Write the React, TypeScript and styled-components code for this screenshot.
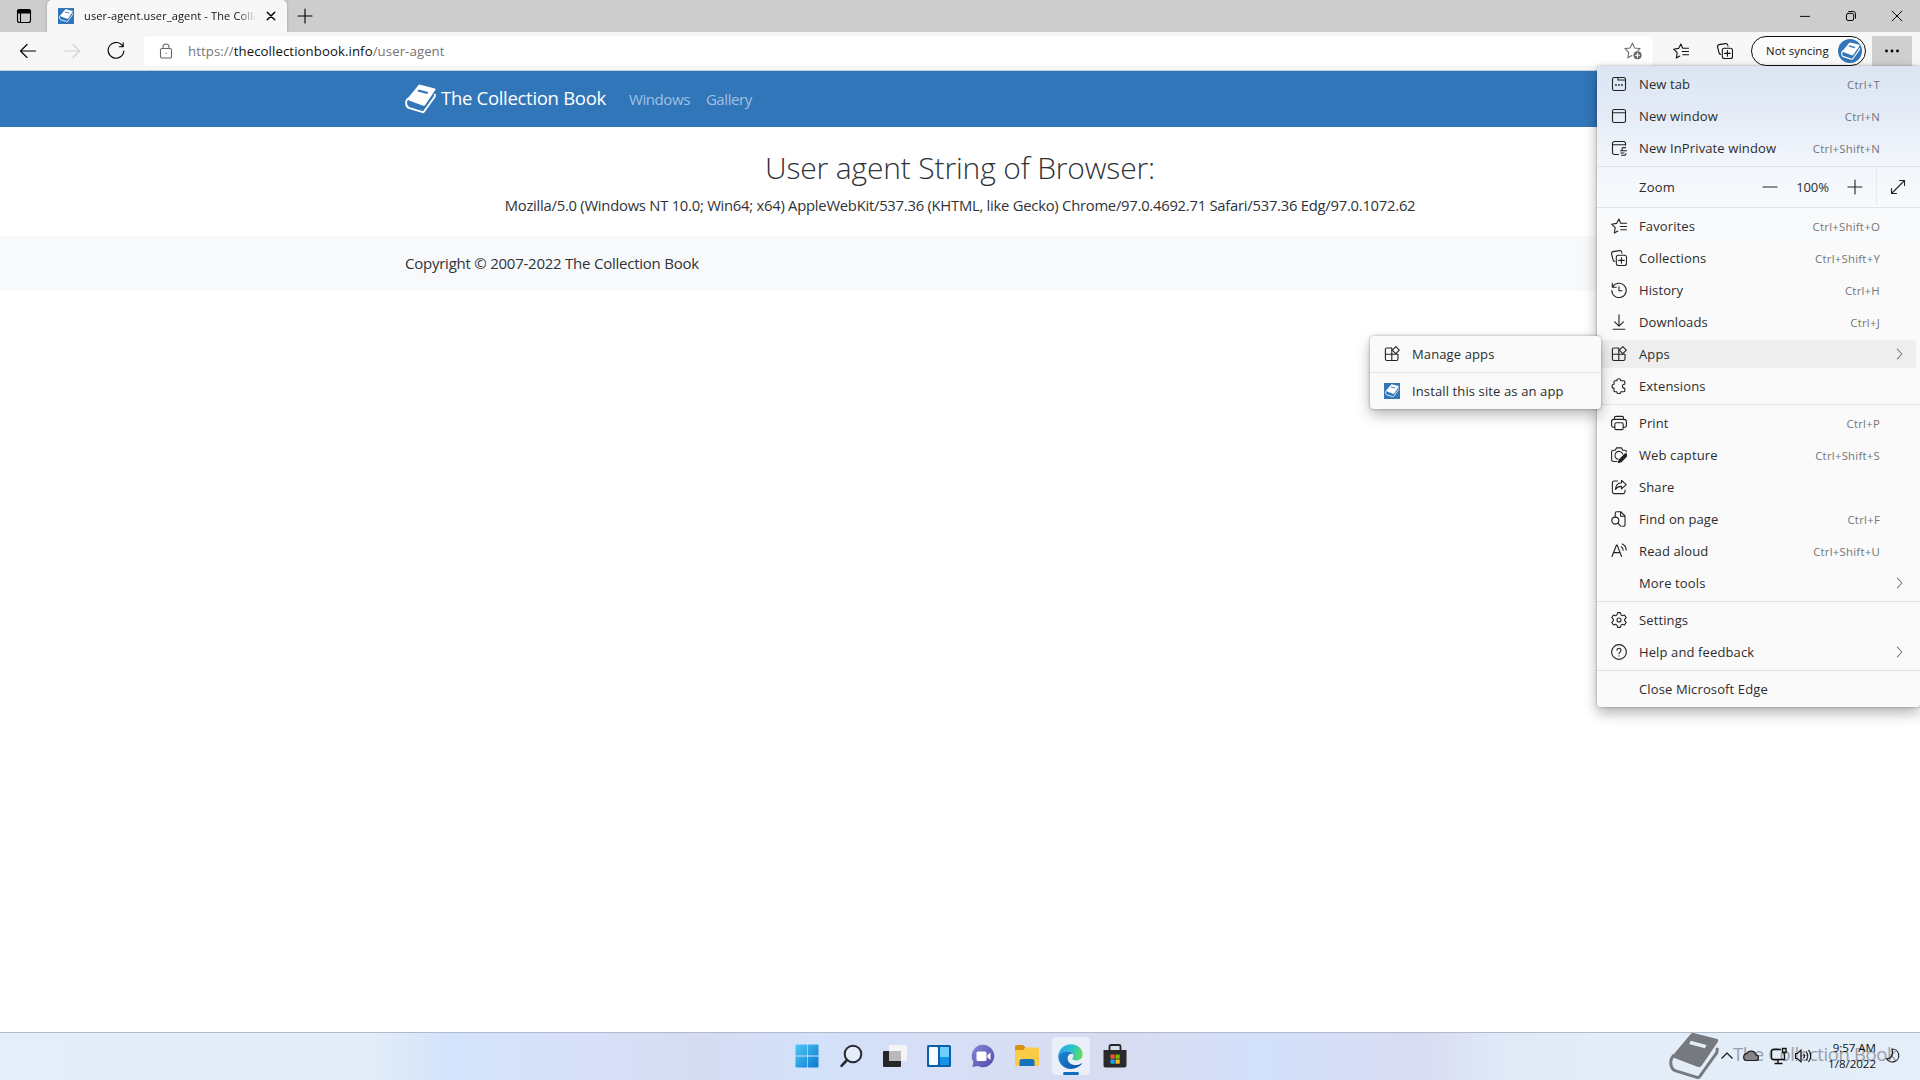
import React from "react";
import styled, { createGlobalStyle } from "styled-components";

const Global = createGlobalStyle`
  * { box-sizing: border-box; }
  html, body { margin: 0; padding: 0; background: #fff; overflow: hidden; }
  body { font-family: "Open Sans", "Noto Sans", sans-serif; color: #2f3338; }
  svg { display: block; flex: none; }
`;

/* ---------- icons ---------- */

const Line = styled.svg.attrs({ viewBox: "0 0 16 16", fill: "none" })<{ $size?: number; $color?: string; $w?: number }>`
  width: ${(p) => p.$size ?? 16}px;
  height: ${(p) => p.$size ?? 16}px;
  stroke: ${(p) => p.$color ?? "#222"};
  stroke-width: ${(p) => p.$w ?? 1.1};
  stroke-linecap: round;
  stroke-linejoin: round;
`;

const Book = ({ w, color, slit }: { w: number; color: string; slit: string }) => (
  <svg width={w} height={w * 0.957} viewBox="44 72 92 88">
    <path d="M89 74 L133 85 Q136 87 134 90 L104 134 Q101 138 96 136 L54 120 Q50 118 52 114 L82 78 Q85 73 89 74Z" fill={color} />
    <path d="M84 88 L113 96 L110 102 L81 94Z" fill={slit} />
    <path d="M133 101 L132 110 L101 153 Q99 157 94 155 L55 143 Q45 138 48 122 L53 114" fill="none" stroke={color} strokeWidth="5.5" strokeLinejoin="round" />
  </svg>
);

const TabActions = () => (
  <Line $color="#000">
    <rect x="1.5" y="1.5" width="13" height="13" rx="2" />
    <path d="M1.5 3.5a2 2 0 0 1 2-2h9a2 2 0 0 1 2 2V5h-13z" fill="#000" />
    <path d="M4.5 5v9.5" />
  </Line>
);
const StarLines = ({ color = "#222" }) => (
  <Line $color={color}>
    <path d="M9.6 5 7.9 1 5.6 5.4.6 6.2l3.6 3.5-.9 5.3 3.5-2" />
    <path d="M10 5.2h5.5M9.2 8.5h6.3M9.8 11.8h5.7" />
  </Line>
);
const Collections = ({ color = "#222" }) => (
  <Line $color={color}>
    <rect x="5.3" y="5.3" width="10.2" height="10.2" rx="2" />
    <path d="M10.4 7.6v5.6M7.6 10.4h5.6M3.6 11.4A2.2 2.2 0 0 1 2 9.6L.6 4A2 2 0 0 1 2 1.6L8.4.6a2 2 0 0 1 2.3 1.6l.3 1" />
  </Line>
);
const NewTab = () => (
  <Line>
    <rect x="1.5" y="1.5" width="13" height="13" rx="1.8" />
    <path d="M7 1.5V4h7.5" />
    <path d="M4.6 8.9h.7M7.6 8.9h.7M10.6 8.9h.7" strokeWidth="1.5" />
  </Line>
);
const NewWindow = () => (
  <Line>
    <rect x="1.5" y="1.5" width="13" height="13" rx="1.8" />
    <path d="M1.5 4.8h13" />
  </Line>
);
const InPrivate = () => (
  <Line>
    <path d="M7.5 14.5H3.3a1.8 1.8 0 0 1-1.8-1.8V3.3a1.8 1.8 0 0 1 1.8-1.8h9.4a1.8 1.8 0 0 1 1.8 1.8v2M1.5 4.8h13" />
    <path d="M14.5 7.6h-2.3a1.6 1.6 0 0 0 0 3.1h2.2M9.5 10.8h6M9.8 13h3.2M10.5 15.3h2.8a1.6 1.6 0 0 0 1.6-1.4" />
  </Line>
);
const History = () => (
  <Line>
    <path d="M1.3 1.4v3.9h3.9M1.6 5.1A7.2 7.2 0 1 1 .8 8.5M8 4.8v4h3" />
  </Line>
);
const Download = () => (
  <Line>
    <path d="M8 .8v11M3.6 7.8 8 12.2l4.4-4.4M2.2 15.3h11.6" />
  </Line>
);
const Apps = () => (
  <Line>
    <path d="M7.8 2H3a1.6 1.6 0 0 0-1.6 1.6v9.3A1.6 1.6 0 0 0 3 14.5h9.4a1.6 1.6 0 0 0 1.6-1.6V8.3H1.4M7.8 2v12.5" />
    <path d="M11.8.7 15.3 4.2l-3.5 3.5-3.5-3.5z" />
  </Line>
);
const Extensions = () => (
  <Line>
    <path d="M5.8 2.8a2 2 0 0 1 4 0h3a1 1 0 0 1 1 1v2.4h-.4a2 2 0 0 0 0 4h.4v2.6a1 1 0 0 1-1 1h-3a2 2 0 0 1-4 0H4a1 1 0 0 1-1-1v-2.6a2 2 0 0 1 0-4V3.8a1 1 0 0 1 1-1z" />
  </Line>
);
const Print = () => (
  <Line>
    <path d="M3.8 12.2H2.3A1.7 1.7 0 0 1 .6 10.5V6.7a2.3 2.3 0 0 1 2.3-2.3h10.2a2.3 2.3 0 0 1 2.3 2.3v3.8a1.7 1.7 0 0 1-1.7 1.7h-1.5M3.4 4.4V3A1.6 1.6 0 0 1 5 1.4h6A1.6 1.6 0 0 1 12.6 3v1.4" />
    <rect x="3.8" y="7.8" width="8.4" height="6.8" rx="1.4" />
  </Line>
);
const Capture = () => (
  <Line>
    <path d="M6 14.5H2.4A1.8 1.8 0 0 1 .6 12.7V5a1.8 1.8 0 0 1 1.8-1.8h1.8L5.6.9h4.8l1.4 2.3h1.8A1.8 1.8 0 0 1 15.4 5" />
    <path d="M7 12.3A4 4 0 1 1 11.8 7.2" />
    <path d="m15.4 7-1.2-.2-6 6L7.4 15.5l2.8-.7L15.6 9z" fill="#222" />
  </Line>
);
const Share = () => (
  <Line>
    <path d="M6.5 2H3.2a1.8 1.8 0 0 0-1.8 1.8v9A1.8 1.8 0 0 0 3.2 14.6h9a1.8 1.8 0 0 0 1.8-1.8V11" />
    <path d="M10.5 1.4 15.2 5.6l-4.7 4.2V7.4C7.8 7.3 6 8.2 4.4 10.4 4.7 6.8 6.6 4 10.5 3.8z" />
  </Line>
);
const Find = () => (
  <Line>
    <path d="M4.2 5.8V2.2A1.5 1.5 0 0 1 5.7.7H9.8L14 5v8.8a1.5 1.5 0 0 1-1.5 1.5h-1.5M9.6.8v4.5H14" />
    <circle cx="4.3" cy="9.6" r="3.5" />
    <path d="m6.8 12.2 3 3" />
  </Line>
);
const ReadAloud = () => (
  <Line>
    <path d="M1 13.5 5.5 2h.6l4.5 11.5M2.6 9.6H9M10.3 3.8a4 4 0 0 1 1.8 3.4M11.3.9a7 7 0 0 1 3.9 6" />
  </Line>
);
const Gear = () => (
  <Line>
    <path d="M6.6.6h2.8l.6 2.3 1.3.8 2.2-.7 1.7 2.6L13.6 7.3v1.4l1.6 1.7-1.7 2.6-2.2-.7-1.3.8-.6 2.3H6.6L6 13.1l-1.3-.8-2.2.7L.8 10.4l1.6-1.7V7.3L.8 5.6l1.7-2.6 2.2.7L6 2.9z" />
    <circle cx="8" cy="8" r="2" />
  </Line>
);
const Help = () => (
  <Line>
    <circle cx="8" cy="8" r="7.4" />
    <path d="M6 6.2a2 2 0 1 1 3.2 1.7C8.4 8.5 8 8.8 8 9.7M8 11.8v.1" />
  </Line>
);
const Chevron = () => (
  <Line $size={12} $color="#777" $w={1.4}>
    <path d="m4.5 1.5 6 6.5-6 6.5" />
  </Line>
);

/* ---------- window chrome ---------- */

const Screen = styled.div`
  width: 1920px;
  height: 1080px;
  display: flex;
  flex-direction: column;
  background: #fff;
  position: relative;
  overflow: hidden;
`;
const TabStrip = styled.div`
  height: 32px;
  flex: none;
  display: flex;
  background: #cdcdcd;
`;
const Slot = styled.div<{ $w: number }>`
  width: ${(p) => p.$w}px;
  height: 100%;
  display: flex;
  align-items: center;
  justify-content: center;
  flex: none;
`;
const Tab = styled.div`
  width: 240px;
  height: 32px;
  background: #f7f7f7;
  border-radius: 5px 5px 0 0;
  box-shadow: 0 0 3px rgba(0, 0, 0, 0.25);
  display: flex;
  align-items: center;
  justify-content: space-between;
  padding: 0 10px 0 11px;
`;
const Favicon = styled.div`
  width: 16px;
  height: 16px;
  background: #3176b9;
  display: flex;
  align-items: center;
  justify-content: center;
  flex: none;
`;
const TabTitle = styled.div`
  width: 172px;
  margin-left: 10px;
  margin-right: auto;
  font-size: 11px;
  line-height: 16px;
  letter-spacing: 0.14px;
  white-space: nowrap;
  overflow: hidden;
  color: #111;
  mask-image: linear-gradient(90deg, #000 90%, transparent 100%);
`;
const WindowButtons = styled.div`
  margin-left: auto;
  display: flex;
`;
const Toolbar = styled.div`
  height: 39px;
  flex: none;
  background: #f7f7f7;
  border-bottom: 1px solid #c5d0da;
  display: flex;
  align-items: center;
`;
const AddressBar = styled.div`
  width: 1509px;
  height: 30px;
  background: #fff;
  border-radius: 3px;
  display: flex;
  align-items: center;
  padding: 0 11px 0 14px;
  box-shadow: 0 0 1px rgba(0, 0, 0, 0.12);
`;
const Url = styled.div`
  margin-left: 14px;
  font-size: 13.2px;
  letter-spacing: 0.09px;
  color: #767676;
  flex: 1;
  b { font-weight: 400; color: #111; }
`;
const Profile = styled.div`
  width: 115px;
  height: 30px;
  border: 1px solid #111;
  border-radius: 15px;
  background: #fbfbfb;
  display: flex;
  align-items: center;
  justify-content: space-between;
  padding: 0 3px 0 14px;
  font-size: 11.4px;
  letter-spacing: 0.05px;
  line-height: 16px;
  white-space: nowrap;
  color: #111;
`;
const Avatar = styled.div`
  width: 24px;
  height: 24px;
  border-radius: 50%;
  background: #3176b9;
  display: flex;
  align-items: center;
  justify-content: center;
`;
const MoreButton = styled.div`
  width: 40px;
  height: 30px;
  margin-left: 6px;
  background: #cfcfcf;
  display: flex;
  align-items: center;
  justify-content: center;
`;

/* ---------- page ---------- */

const Navbar = styled.div`
  height: 56px;
  flex: none;
  background: #3176b9;
  display: flex;
  align-items: center;
  padding-left: 405px;
`;
const Brand = styled.div`
  margin-left: 5px;
  width: 188px;
  padding-bottom: 3px;
  font-size: 18.5px;
  letter-spacing: -0.3px;
  color: #fff;
  white-space: nowrap;
`;
const NavLink = styled.div`
  font-size: 15px;
  letter-spacing: -0.42px;
  color: #a0c0e2;
  margin-right: 16px;
`;
const Main = styled.main`
  height: 109px;
  flex: none;
  display: flex;
  flex-direction: column;
  align-items: center;
  padding-top: 20px;
`;
const Heading = styled.h1`
  margin: 0;
  font-size: 30px;
  letter-spacing: -0.15px;
  line-height: 42px;
  font-weight: 300;
  white-space: nowrap;
`;
const Agent = styled.p`
  margin: 4px 0 0;
  font-size: 14.8px;
  letter-spacing: -0.25px;
  line-height: 24px;
  white-space: nowrap;
`;
const Footer = styled.footer`
  height: 55px;
  flex: none;
  background: #f8f9fa;
  padding-left: 405px;
  font-size: 15px;
  letter-spacing: -0.24px;
  line-height: 55px;
`;

/* ---------- menus ---------- */

const Menu = styled.div`
  position: absolute;
  left: 1597px;
  top: 66px;
  width: 323px;
  padding: 2px 0;
  border-radius: 4px;
  background: linear-gradient(180deg, #dbe5f3 0, #e2eaf6 40px, #f0f4fb 90px, #f8fafc 140px, #fafafa 200px);
  box-shadow: 0 6px 14px rgba(0, 0, 0, 0.3), 0 0 3px rgba(0, 0, 0, 0.3);
`;
const SubMenu = styled.div`
  position: absolute;
  left: 1370px;
  top: 336px;
  width: 231px;
  padding: 2px 0;
  border-radius: 4px;
  background: #fafafa;
  box-shadow: 0 6px 14px rgba(0, 0, 0, 0.28), 0 0 3px rgba(0, 0, 0, 0.35);
`;
const Rule = styled.div`
  height: 1px;
  margin: 2px 0;
  background: #e0e2e6;
`;
const Row = styled.div<{ $active?: boolean }>`
  height: ${(p) => (p.$active ? 28 : 32)}px;
  margin: ${(p) => (p.$active ? "2px 4px" : "0 4px")};
  padding: 0 10px;
  border-radius: 3px;
  background: ${(p) => (p.$active ? "#eeeeee" : "transparent")};
  display: flex;
  align-items: center;
`;
const RowIcon = styled.div`
  width: 16px;
  display: flex;
`;
const Label = styled.div`
  margin-left: 12px;
  font-size: 13px;
  letter-spacing: 0.12px;
  color: #2c2c2c;
  white-space: nowrap;
  flex: 1;
`;
const Shortcut = styled.div`
  font-size: 11.4px;
  letter-spacing: 0.23px;
  color: #757575;
  margin-right: 26px;
`;
const ZoomRow = styled.div`
  height: 40px;
  margin: -2px 0;
  padding-left: 42px;
  display: flex;
  align-items: center;
  font-size: 13px;
  color: #2c2c2c;
`;
const ZoomLabel = styled.div`
  width: 123px;
  letter-spacing: 0.25px;
`;
const ZoomValue = styled.div`
  width: 69px;
  text-align: center;
  letter-spacing: -0.1px;
`;
const ZoomFull = styled.div`
  margin-left: 13px;
  width: 43px;
  height: 36px;
  border-left: 1px solid #e6e8ec;
  display: flex;
  align-items: center;
  justify-content: center;
`;

type Item = { label: string; icon?: React.ReactNode; keys?: string; sub?: boolean; active?: boolean };
const MenuRow = ({ label, icon, keys, sub, active }: Item) => (
  <Row $active={active}>
    <RowIcon>{icon}</RowIcon>
    <Label>{label}</Label>
    {keys && <Shortcut>{keys}</Shortcut>}
    {sub && <Chevron />}
  </Row>
);

const groups: Item[][] = [
  [
    { label: "Favorites", icon: <StarLines />, keys: "Ctrl+Shift+O" },
    { label: "Collections", icon: <Collections />, keys: "Ctrl+Shift+Y" },
    { label: "History", icon: <History />, keys: "Ctrl+H" },
    { label: "Downloads", icon: <Download />, keys: "Ctrl+J" },
    { label: "Apps", icon: <Apps />, sub: true, active: true },
    { label: "Extensions", icon: <Extensions /> },
  ],
  [
    { label: "Print", icon: <Print />, keys: "Ctrl+P" },
    { label: "Web capture", icon: <Capture />, keys: "Ctrl+Shift+S" },
    { label: "Share", icon: <Share /> },
    { label: "Find on page", icon: <Find />, keys: "Ctrl+F" },
    { label: "Read aloud", icon: <ReadAloud />, keys: "Ctrl+Shift+U" },
    { label: "More tools", sub: true },
  ],
  [
    { label: "Settings", icon: <Gear /> },
    { label: "Help and feedback", icon: <Help />, sub: true },
  ],
  [{ label: "Close Microsoft Edge" }],
];

/* ---------- taskbar ---------- */

const Taskbar = styled.div`
  margin-top: auto;
  height: 48px;
  flex: none;
  display: flex;
  justify-content: center;
  align-items: center;
  padding-left: 1px;
  position: relative;
  box-shadow: inset 0 1px 0 #b3b9c8;
  background: linear-gradient(90deg, #e4eef8 0, #e3edf8 370px, #d3e3fb 450px, #d7e0f8 600px, #d5dcf2 700px, #d3e1fa 810px, #d6dff6 950px, #d8dcf1 1120px, #d2e0fa 1260px, #d8dcf2 1420px, #dfe9f7 1500px, #e3edf8 1600px, #e4eef8 100%);
`;
const TaskItem = styled.div<{ $on?: boolean }>`
  width: 38px;
  height: 38px;
  margin: 0 3px;
  border-radius: 4px;
  background: ${(p) => (p.$on ? "#ebeffa" : "transparent")};
  display: flex;
  align-items: center;
  justify-content: center;
  position: relative;
`;
const Running = styled.div`
  position: absolute;
  left: 11px;
  bottom: 0;
  width: 16px;
  height: 3px;
  border-radius: 2px;
  background: #0f6cbd;
`;
const Tray = styled.div`
  position: absolute;
  right: 0;
  top: 0;
  height: 48px;
  width: 200px;
  display: flex;
  align-items: center;
`;
const Clock = styled.div`
  width: 61px;
  padding-right: 1px;
  text-align: right;
  font-size: 11.6px;
  line-height: 16px;
  letter-spacing: -0.05px;
  color: #111;
  white-space: nowrap;
`;
const Watermark = styled.div`
  position: absolute;
  right: 0;
  top: 0;
  width: 251px;
  height: 48px;
  display: flex;
  align-items: center;
  overflow: hidden;
`;
const WatermarkText = styled.div`
  margin-left: 14px;
  padding-bottom: 5px;
  font-size: 18.5px;
  letter-spacing: -0.38px;
  color: #9aa0a8;
  white-space: nowrap;
`;

const TaskIcons = () => (
  <>
    <TaskItem>
      <svg width="24" height="24" viewBox="0 0 24 24">
        <defs>
          <linearGradient id="win" x1="0" y1="0" x2="1" y2="1">
            <stop offset="0" stopColor="#4fc8f4" />
            <stop offset="1" stopColor="#0a78d0" />
          </linearGradient>
        </defs>
        <path d="M1.5.5H12v10.9H.5V1.5a1 1 0 0 1 1-1zM12.7.5h9.8a1 1 0 0 1 1 1v9.9H12.7zM.5 12.4H12v11.1H1.5a1 1 0 0 1-1-1zM12.7 12.4h10.8v10.1a1 1 0 0 1-1 1h-9.8z" fill="url(#win)" />
      </svg>
    </TaskItem>
    <TaskItem>
      <svg width="24" height="24" viewBox="0 0 24 24" fill="none" stroke="#262a33" strokeLinecap="round">
        <circle cx="14" cy="10" r="8.3" strokeWidth="2" fill="#e6ebfa" />
        <path d="m8 16-5.5 5.8" strokeWidth="2.6" />
      </svg>
    </TaskItem>
    <TaskItem>
      <svg width="26" height="24" viewBox="0 0 26 24">
        <rect x="1" y="7" width="18" height="16" rx="1" fill="#262626" />
        <rect x="7" y="1" width="18" height="16" rx="1" fill="#f4f4f6" />
        <rect x="7" y="7" width="12" height="10" fill="#b9b9ba" />
      </svg>
    </TaskItem>
    <TaskItem>
      <svg width="24" height="24" viewBox="0 0 24 24">
        <rect y="1" width="24" height="22" rx="1.5" fill="#0d5ea8" />
        <rect x="2" y="3" width="9" height="18" rx="1" fill="#f5fbff" />
        <rect x="13" y="3" width="9" height="10" fill="#6cd0fb" />
        <rect x="13" y="13" width="9" height="8" fill="#1793e6" />
      </svg>
    </TaskItem>
    <TaskItem>
      <svg width="24" height="24" viewBox="0 0 24 24">
        <defs>
          <linearGradient id="chat" x1="0" y1="0" x2="1" y2="1">
            <stop offset="0" stopColor="#8388d6" />
            <stop offset="1" stopColor="#5448ab" />
          </linearGradient>
        </defs>
        <path d="M12 .8A11.2 11.2 0 1 1 7 22l-5.6 1 .9-5.2A11.2 11.2 0 0 1 12 .8z" fill="url(#chat)" />
        <rect x="5.5" y="7.5" width="10" height="9.5" rx="1.5" fill="#fff" />
        <path d="m16.5 11 3-2.5v7.5l-3-2.5z" fill="#fff" />
      </svg>
    </TaskItem>
    <TaskItem>
      <svg width="26" height="24" viewBox="0 0 26 24">
        <path d="M1 3a2 2 0 0 1 2-2h6l3 3v3H1z" fill="#d49112" />
        <path d="M1 6h8l2.500-2.500H23.500A1.500 1.500 0 0 1 25 5v15.500a1.500 1.500 0 0 1-1.500 1.500h-21A1.500 1.500 0 0 1 1 20.500z" fill="#fbcb47" />
        <path d="M5.500 22v-4.500A2.500 2.500 0 0 1 8 15h10a2.500 2.500 0 0 1 2.500 2.500V22z" fill="#1572bd" />
      </svg>
    </TaskItem>
    <TaskItem $on>
      <svg width="25" height="25" viewBox="0 0 24 24">
        <defs>
          <linearGradient id="edgeTop" x1="0" y1="0.3" x2="1" y2="0.5">
            <stop offset="0" stopColor="#22a7e8" />
            <stop offset="0.55" stopColor="#2bc4cf" />
            <stop offset="1" stopColor="#66dc55" />
          </linearGradient>
          <linearGradient id="edgeLow" x1="0" y1="0" x2="1" y2="1">
            <stop offset="0" stopColor="#1989dc" />
            <stop offset="1" stopColor="#0f52a0" />
          </linearGradient>
        </defs>
        <path d="M.3 11.5C.8 5 6 .2 12.2.2c6.8 0 11.5 4.6 11.5 9.6 0 3.6-2.9 6-6 6-2.5 0-4-.8-4-1.7 0-.6 1-1.2 1-2.9 0-2.3-2.3-4.2-5.4-4.2C5 7 1.5 9 .3 11.5z" fill="url(#edgeTop)" />
        <path d="M.3 11.5C1.5 8.6 5 7 8.7 7c3 0 5 1.2 5.8 2.6-3-.8-5.3 1-5.3 4 0 3.8 3.5 6.6 7.5 6.6 2.2 0 4.3-.8 5.6-1.6.5-.3.9.2.5.7C20.5 22.3 16.6 24 12.7 24 5.5 24 .1 18.5.3 11.5z" fill="url(#edgeLow)" />
      </svg>
      <Running />
    </TaskItem>
    <TaskItem>
      <svg width="24" height="24" viewBox="0 0 24 24">
        <path d="M6.5 7V2.5A1.5 1.5 0 0 1 8 1h8a1.5 1.5 0 0 1 1.5 1.5V7" fill="none" stroke="#262626" strokeWidth="1.8" />
        <path d="M.5 6h23v15.5a2 2 0 0 1-2 2h-19a2 2 0 0 1-2-2z" fill="#2a2a2a" />
        <rect x="7.5" y="10.5" width="4.2" height="4.2" fill="#f0562b" />
        <rect x="12.5" y="10.5" width="4.2" height="4.2" fill="#7fba00" />
        <rect x="7.5" y="15.5" width="4.2" height="4.2" fill="#13a5ee" />
        <rect x="12.5" y="15.5" width="4.2" height="4.2" fill="#fdb913" />
      </svg>
    </TaskItem>
  </>
);

const TrayIcons = () => (
  <svg width="96" height="24" viewBox="0 0 96 24" fill="none" stroke="#111" strokeWidth="1.2">
    <path d="m1.5 14.5 5.500-5.500 5.500 5.500" />
    <path d="M26 16.500h9.500a2.800 2.800 0 0 0 .4-5.600 4.800 4.800 0 0 0-9-1.200 3.500 3.500 0 0 0-.9 6.800z" fill="#86868a" stroke="#222" />
    <path d="M61 5.500h-7.500a2 2 0 0 0-2 2v6a2 2 0 0 0 2 2h11v-5M58 15.500v4M54.500 19.500h8M62.500 4.500h3.500v4h-3.500zM64.200 8.500v3" strokeWidth="1.4" />
    <path d="M75.500 9.500h2l3.500-3.500v12l-3.500-3.500h-2zM83.500 9.500a4 4 0 0 1 0 5M86 7.500a7 7 0 0 1 0 9M88.500 5.800a10 10 0 0 1 0 12.400" strokeWidth="1.1" />
  </svg>
);

export default function App() {
  return (
    <Screen>
      <Global />
      <TabStrip>
        <Slot $w={47}><TabActions /></Slot>
        <Tab>
          <Favicon><Book w={14} color="#fff" slit="#3176b9" /></Favicon>
          <TabTitle>user-agent.user_agent - The Collection</TabTitle>
          <Line $size={12} $color="#000" $w={1.9}><path d="m3 3 10 10M13 3 3 13" /></Line>
        </Tab>
        <Slot $w={35}><Line $color="#000"><path d="M8 1v14M1 8h14" /></Line></Slot>
        <WindowButtons>
          <Slot $w={46}><Line $size={12} $color="#000" $w={1.3}><path d="M2 8.500h12" /></Line></Slot>
          <Slot $w={46}>
            <Line $size={12} $color="#000" $w={1.3}>
              <rect x="2" y="4.5" width="9.5" height="9.5" rx="2" />
              <path d="M5 2h6a3 3 0 0 1 3 3v6" />
            </Line>
          </Slot>
          <Slot $w={46}><Line $size={12} $color="#000" $w={1.3}><path d="m1.500 1.500 13 13M14.500 1.500l-13 13" /></Line></Slot>
        </WindowButtons>
      </TabStrip>
      <Toolbar>
        <Slot $w={56}><Line $color="#000"><path d="M15.500 8H.5M7 1.500.5 8 7 14.500" /></Line></Slot>
        <Slot $w={32}><Line $color="#cfcfcf"><path d="M.5 8h15M9 1.500 15.500 8 9 14.500" /></Line></Slot>
        <Slot $w={56}><Line $size={18} $color="#000" $w={1}><path d="M14 3.800A7 7 0 1 0 15 8M14.400.8v3.400H11" /></Line></Slot>
        <AddressBar>
          <Line $color="#666">
            <rect x="2.5" y="5.5" width="11" height="9.5" rx="1.5" />
            <path d="M5 5.500V4a3 3 0 0 1 6 0v1.500M8 10.100v.2" />
          </Line>
          <Url>https://<b>thecollectionbook.info</b>/user-agent</Url>
          <Line $size={18} $color="#707070" $w={1}>
            <path d="M7 12 3.400 14l.8-4.800L.8 5.900l4.600-.6L7.500 1l2 4.300 4.700.6-1.800 1.800" />
            <circle cx="12" cy="11.8" r="3.6" fill="#666" stroke="none" />
            <path d="M12 10v3.600M10.200 11.800h3.600" stroke="#fff" />
          </Line>
        </AddressBar>
        <Slot $w={10} />
        <Slot $w={36}><StarLines color="#111" /></Slot>
        <Slot $w={52}><Collections color="#111" /></Slot>
        <Profile>
          Not syncing
          <Avatar><Book w={19} color="#fff" slit="#3176b9" /></Avatar>
        </Profile>
        <MoreButton>
          <svg width="16" height="4" viewBox="0 0 16 4"><circle cx="2.5" cy="2" r="1.4" /><circle cx="8" cy="2" r="1.4" /><circle cx="13.5" cy="2" r="1.4" /></svg>
        </MoreButton>
      </Toolbar>

      <Navbar>
        <Book w={31} color="#fff" slit="#3176b9" />
        <Brand>The Collection Book</Brand>
        <NavLink>Windows</NavLink>
        <NavLink>Gallery</NavLink>
      </Navbar>
      <Main>
        <Heading>User agent String of Browser:</Heading>
        <Agent>Mozilla/5.0 (Windows NT 10.0; Win64; x64) AppleWebKit/537.36 (KHTML, like Gecko) Chrome/97.0.4692.71 Safari/537.36 Edg/97.0.1072.62</Agent>
      </Main>
      <Footer>Copyright © 2007-2022 The Collection Book</Footer>

      <Taskbar>
        <TaskIcons />
        <Watermark>
          <Book w={50} color="#76797d" slit="#e4eef8" />
          <WatermarkText>The Collection Book</WatermarkText>
        </Watermark>
        <Tray>
          <TrayIcons />
          <Clock>9:57 AM<br />1/8/2022</Clock>
          <Slot $w={30}>
            <Line $color="#222" $w={1.2}><path d="M8 1a6.500 6.500 0 1 1-5.500 9.500C7 11.500 9.500 7 8 1z" /></Line>
          </Slot>
        </Tray>
      </Taskbar>

      <Menu>
        <MenuRow label="New tab" icon={<NewTab />} keys="Ctrl+T" />
        <MenuRow label="New window" icon={<NewWindow />} keys="Ctrl+N" />
        <MenuRow label="New InPrivate window" icon={<InPrivate />} keys="Ctrl+Shift+N" />
        <Rule />
        <ZoomRow>
          <ZoomLabel>Zoom</ZoomLabel>
          <Line><path d="M1 8h14" /></Line>
          <ZoomValue>100%</ZoomValue>
          <Line><path d="M8 1v14M1 8h14" /></Line>
          <ZoomFull>
            <Line><path d="M1.500 14.500l13-13M9.500 1.500h5v5M1.500 9.500v5h5" /></Line>
          </ZoomFull>
        </ZoomRow>
        {groups.map((g, i) => (
          <React.Fragment key={i}>
            <Rule />
            {g.map((it) => <MenuRow key={it.label} {...it} />)}
          </React.Fragment>
        ))}
      </Menu>
      <SubMenu>
        <MenuRow label="Manage apps" icon={<Apps />} />
        <Rule />
        <MenuRow label="Install this site as an app" icon={<Favicon><Book w={14} color="#fff" slit="#3176b9" /></Favicon>} />
      </SubMenu>
    </Screen>
  );
}
